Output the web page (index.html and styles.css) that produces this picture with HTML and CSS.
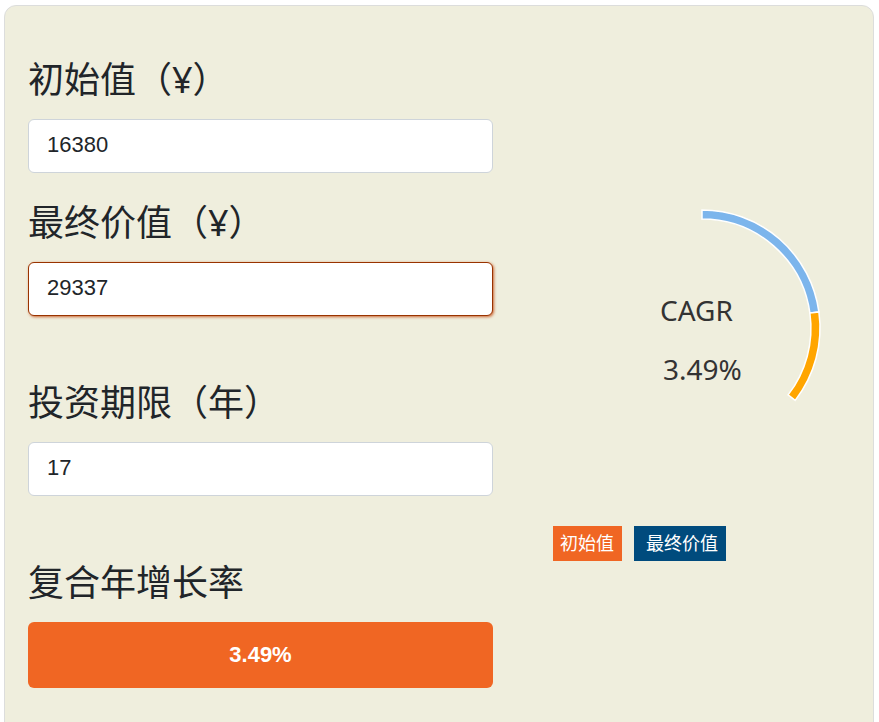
FILE: index.html
```html
<!DOCTYPE html>
<html lang="zh-CN">
<head>
<meta charset="utf-8">
<meta name="viewport" content="width=device-width, initial-scale=1">
<title>CAGR</title>
<link rel="stylesheet" href="styles.css">
</head>
<body>
<main class="card">
  <form class="form">
    <div class="field field-first">
      <label class="label" for="initial">初始值（¥）</label>
      <input class="input" id="initial" type="text" inputmode="numeric" value="16380">
    </div>
    <div class="field">
      <label class="label" for="final">最终价值（¥）</label>
      <input class="input input-active" id="final" type="text" inputmode="numeric" value="29337">
    </div>
    <div class="field">
      <label class="label" for="years">投资期限（年）</label>
      <input class="input" id="years" type="text" inputmode="numeric" value="17">
    </div>
    <div class="field">
      <label class="label" for="rate">复合年增长率</label>
      <output class="result" id="rate" for="initial final years">3.49%</output>
    </div>
  </form>
  <section class="summary">
    <svg class="chart" viewBox="0 0 298 298" role="img" aria-label="CAGR 3.49%">
      <path class="slice slice-initial" d="M149 31A118 118 0 0 1 265.900 132.900L256.900 134.100A109 109 0 0 0 149 40Z"/>
      <path class="slice slice-final" d="M265.900 132.900A118 118 0 0 1 242.200 221.400L235.100 215.900A109 109 0 0 0 256.900 134.100Z"/>
      <text class="chart-text" x="107" y="142">CAGR</text>
      <text class="chart-text" x="110" y="201">3.49%</text>
    </svg>
    <div class="legend">
      <span class="tag tag-initial">初始值</span>
      <span class="tag tag-final">最终价值</span>
    </div>
  </section>
</main>
</body>
</html>
```
FILE: styles.css
```css
* {
  box-sizing: border-box;
}

body {
  margin: 5px 5px 5px 4px;
  background: #fff;
  color: #212529;
  font-family: "Liberation Sans", "Noto Sans CJK SC", sans-serif;
}

.card {
  display: grid;
  grid-template-columns: 465fr 298fr;
  column-gap: 60px;
  padding: 47px 22px 60px 23px;
  border: 1px solid #dcdddc;
  border-radius: 12px;
  background: #efeedd;
}

.field {
  display: flex;
  flex-direction: column;
  gap: 12px;
  margin-bottom: 60px;
}

.field-first {
  margin-bottom: 23px;
}

.field:last-child {
  margin-bottom: 0;
}

.label {
  font-family: "Noto Sans", "Noto Sans CJK SC", sans-serif;
  font-size: 36px;
  line-height: 54px;
}

.input {
  width: 100%;
  height: 54px;
  padding: 0 18px 2px;
  border: 1px solid #ced4da;
  border-radius: 6px;
  background: #fff;
  color: inherit;
  font-family: inherit;
  font-size: 22px;
}

.input-active {
  border-color: #993300;
  box-shadow: 1px 1px 3px #cc6633;
}

.result {
  display: block;
  border-radius: 6px;
  background: #f06623;
  color: #fff;
  font-size: 22px;
  font-weight: 700;
  line-height: 66px;
  text-align: center;
}

.summary {
  padding-top: 126px;
}

.chart {
  display: block;
  width: 100%;
}

.slice {
  stroke: #fff;
  stroke-width: 1.5;
}

.slice-initial {
  fill: #7cb5ec;
}

.slice-final {
  fill: #ffa500;
}

.chart-text {
  fill: #333;
  font-family: "Noto Sans", sans-serif;
  font-size: 28px;
}

.legend {
  display: flex;
  gap: 12px;
  margin-top: 49px;
}

.tag {
  color: #fff;
  font-family: "Noto Sans", "Noto Sans CJK SC", sans-serif;
  font-size: 18px;
  line-height: 35px;
}

.tag-initial {
  padding: 0 8px 0 7px;
  background: #f06623;
}

.tag-final {
  padding: 0 8px 0 12px;
  background: #004b7d;
}
```
